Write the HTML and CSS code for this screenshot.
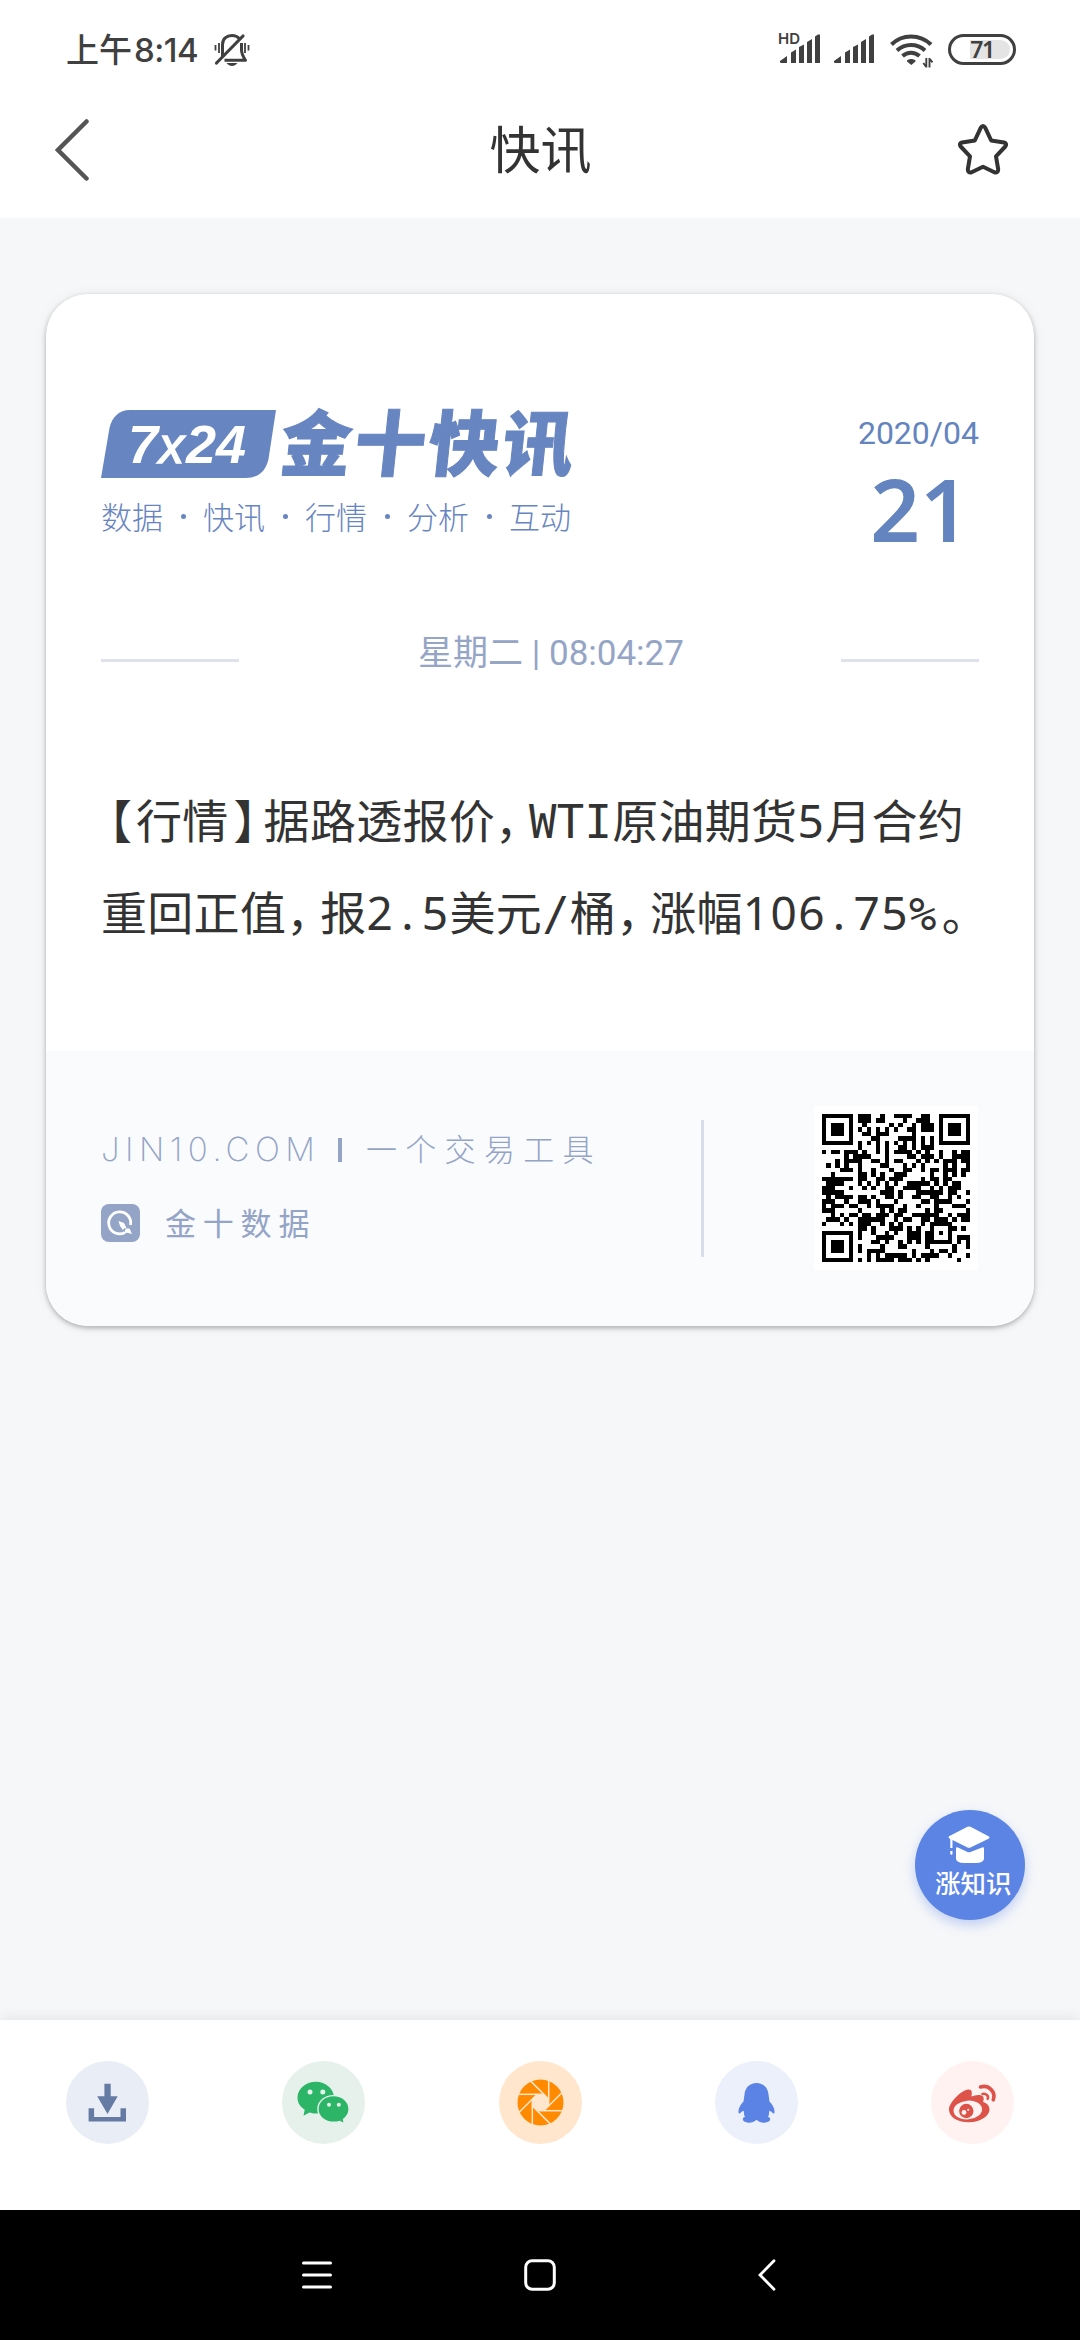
FILE: index.html
```html
<!DOCTYPE html>
<html lang="zh-CN">
<head>
<meta charset="utf-8">
<title>快讯</title>
<link rel="stylesheet" href="styles.css">
</head>
<body>
<div class="screen">
  <div class="status">
    <div class="status-left">
      <span class="clock">上午<span class="digits">8:14</span></span>
      <svg class="bell" width="36" height="34" viewBox="0 0 36 34" fill="none" stroke="#404040">
        <path d="M8.500 23V11.500C8.500 6 12.500 2.500 18 2.500c3 0 5.500 1 7.200 3M27.500 10v7c0 4 1.500 6.500 4 10.300H10.500" stroke-width="3" stroke-linejoin="round"/>
        <path d="M2.500 30L29 3" stroke-width="3.200" stroke-linecap="round"/>
        <path d="M5 10v10M1.500 12v5.500M31 10v10M34.500 12v5.500" stroke-width="1.800"/>
        <path d="M12.500 30h11c-1.500 2-3.500 3-5.500 3s-4-1-5.500-3z" fill="#404040" stroke="none"/>
      </svg>
    </div>
    <div class="status-right">
      <div class="signal-hd">
        <span class="hd">HD</span>
        <svg width="40" height="30" viewBox="0 0 40 30" fill="#404040"><path d="M0 27l7-5v7H1q-1 0-1-1zM11 18.500l5-3V29h-5zM19 13l5-2.500V29h-5zM27 8l5-3V29h-5zM35 2.500L38 .500h2V29h-5z"/></svg>
      </div>
      <svg class="signal" width="40" height="30" viewBox="0 0 40 30" fill="#404040"><path d="M0 27l7-5v7H1q-1 0-1-1zM11 18.500l5-3V29h-5zM19 13l5-2.500V29h-5zM27 8l5-3V29h-5zM35 2.500L38 .500h2V29h-5z"/></svg>
      <svg class="wifi" width="43" height="34" viewBox="0 0 43 34" fill="none" stroke="#404040" stroke-width="4">
        <path d="M1.500 10.500C12-.300 30-.300 41 10.500M7 16.500c7.800-7.300 20-7.300 28 0M12.500 22c5-4.500 12-4.500 17 0"/>
        <path d="M17 26.500c2.500-2 6-2 8.500 0v1L21.300 31 17 27.500z" fill="#404040" stroke="none"/>
        <path d="M36.300 24v9.500M36.300 33l-3-4M39.500 24v9.500M39.500 24.500l3 4" stroke-width="1.900"/>
      </svg>
      <div class="battery"><span class="level"></span><span class="percent">71</span></div>
    </div>
  </div>

  <div class="titlebar">
    <svg width="34" height="62" viewBox="0 0 34 62" fill="none" stroke="#555" stroke-width="4.500" stroke-linecap="round"><path d="M31.500 2.500L3 31l28.500 28.500"/></svg>
    <h1>快讯</h1>
    <svg width="50" height="51" viewBox="0 0 50 51" fill="none" stroke="#333" stroke-width="4" stroke-linejoin="round"><path d="M22.700 3.800q2.300-3.600 4.600 0L33.200 16.500l12.800 2q3.500 1 1.300 4L38 32.300l2.200 13q0 3.900-3.800 3L25 42.800 13.600 48.300q-3.800.900-3.800-3L12 32.300 2.700 22.500q-2.200-3 1.300-4L16.800 16.500z"/></svg>
  </div>

  <main class="content">
    <article class="card">
      <div class="card-body">
        <header class="card-head">
          <div class="brand">
            <div class="logo">
              <div class="badge"><svg width="175" height="68" viewBox="0 0 175 68"><path d="M0 68L8.500 18C11 7 18 0 29 0h146l-7.500 49C165 61 157 68 145 68z" fill="#6785c1"/></svg><span class="badge-text">7<i>x</i>24</span></div>
              <div class="wordmark">金十快讯</div>
            </div>
            <div class="tagline"><span>数据</span><b></b><span>快讯</span><b></b><span>行情</span><b></b><span>分析</span><b></b><span>互动</span></div>
          </div>
          <div class="date"><div class="month">2020/04</div><div class="day">21</div></div>
        </header>
        <div class="timeline"><hr><span>星期二 | 08:04:27</span><hr></div>
        <div class="news">
          <p><span class="pn open">【</span>行情<span class="pn close">】</span>据路透报价<span class="pn">，</span><span class="mono">WTI</span>原油期货<span class="num">5</span>月合约</p>
          <p>重回正值<span class="pn">，</span>报<span class="num">2<span class="dot">.</span>5</span>美元<span class="mono">/</span>桶<span class="pn">，</span>涨幅<span class="num">106<span class="dot">.</span>75</span><span class="mono">%</span><span class="pn stop">。</span></p>
        </div>
      </div>
      <footer class="card-foot">
        <div class="about">
          <div class="site"><span class="domain">JIN10.COM</span><span class="bar"></span><span class="slogan">一个交易工具</span></div>
          <div class="account">
            <svg width="39" height="38" viewBox="0 0 39 38"><rect width="39" height="38" rx="8" fill="#93a4c6"/><path d="M24 28.500A11 11 0 1 1 29.500 21" fill="none" stroke="#fff" stroke-width="2.800"/><path d="M17.500 17l5.500 2 2.500 5-2.200.300-1.300 1.800-3-4z" fill="#fff"/><path d="M24.500 24.500l4 0 2.500 5.500-4.800-1.300-2.400.300z" fill="#fff"/></svg>
            <span>金十数据</span>
          </div>
        </div>
        <div class="divider"></div>
        <div class="qr"><svg id="qr" width="148" height="148" viewBox="0 0 33 33" shape-rendering="crispEdges"></svg></div>
      </footer>
    </article>
    <div class="fab">
      <svg width="42" height="38" viewBox="0 0 42 38" fill="#fff"><path d="M19.500.800q1.500-.800 3 0L41 10.500q1 1 0 2L22.500 21.500q-1.500.600-3 0L4.500 14v8H2.300V13L1 12.300q-1-1 0-2zM2.300 25h2.200v3l-1 1-1.200-1zM8 22.500q0-2 2-1l9.500 4.500q1.500.600 3 0L34 21.500q2-1 2 1V33q-1 4-8 4H16q-7 0-8-4z"/></svg>
      <span>涨知识</span>
    </div>
  </main>

  <div class="share">
    <div class="round save"><svg viewBox="0 0 83 83" fill="#667ba3"><path d="M38.400 22.700h6.300v12.600h7L41.500 53 31.200 35.300h7.200zM22.600 47.300h5.500V56h26.400v-8.700H60v13.200H22.600z"/></svg></div>
    <div class="round wechat"><svg viewBox="0 0 83 83" fill="#2cb566"><path d="M33.800 20.700c10 0 18.200 7 18.200 16.200S43.800 52.500 33.800 52.500c-2.500 0-4.500-.500-6.300-1L21.500 54.800l1.200-6c-4.500-3-7.200-7-7.200-12 0-9 8.200-16.100 18.300-16.100z"/><path d="M51.500 34.600c8.700 0 15.600 6 15.600 13.500 0 4.200-2.200 7.800-5.600 10.200l.700 4.500-4.500-2.400c-2 .600-4 .900-6.200.900-8.700 0-15.600-5.700-15.600-13.200s6.900-13.500 15.600-13.500z" stroke="#e6f1eb" stroke-width="1.400"/><g fill="#e6f1eb"><circle cx="28" cy="31" r="2.500"/><circle cx="40.800" cy="31" r="2.500"/><circle cx="47" cy="43.700" r="2"/><circle cx="56.800" cy="43.700" r="2"/></g></svg></div>
    <div class="round moments"><svg viewBox="0 0 83 83"><circle cx="41.500" cy="41.500" r="23" fill="#ff8a00"/><path d="M38.100 33.300h6.800l4.800 4.800v6.800l-4.800 4.800h-6.800l-4.800-4.800v-6.800z" fill="#ffe6cd"/><g stroke="#ffe6cd" stroke-width="1.500"><path id="blade" d="M49.700 17v28"/><use href="#blade" transform="rotate(45 41.500 41.500)"/><use href="#blade" transform="rotate(90 41.500 41.500)"/><use href="#blade" transform="rotate(135 41.500 41.500)"/><use href="#blade" transform="rotate(180 41.500 41.500)"/><use href="#blade" transform="rotate(225 41.500 41.500)"/><use href="#blade" transform="rotate(270 41.500 41.500)"/><use href="#blade" transform="rotate(315 41.500 41.500)"/></g></svg></div>
    <div class="round qq"><svg viewBox="0 0 83 83" fill="#5b82e5"><path d="M41.500 22C48.500 22 53 27 53.500 33.500L54.500 40.500C57.500 43.500 60 48 59.500 51.500C59.200 53.300 58 52.800 56.500 50.800L54.300 49.800L53.800 54.500L52.800 55.700C55.300 56.500 55.600 57.800 54.800 59.500C52.500 62.500 45 62.500 41.500 58.800C38 62.500 30.500 62.500 28.200 59.500C27.400 57.800 27.700 56.500 30.200 55.700L29.200 54.500L28.700 49.800L26.500 50.800C25 52.800 23.800 53.300 23.500 51.500C23 48 25.500 43.500 28.500 40.500L29.500 33.500C30 27 34.500 22 41.500 22Z"/></svg></div>
    <div class="round weibo"><svg viewBox="0 0 83 83"><path d="M18 48.500C18 42 30 29 37.500 28.500C41 28.200 41.500 32 40.300 35.500C44 34 49 33 51.500 35C53.500 37 52.500 39.500 52 41C56 42 58.500 45 58.500 48.500C58.500 55 49 61.300 38 61.300C27 61.300 18 56.500 18 48.500Z" fill="#de5349"/><ellipse cx="36.800" cy="49" rx="14.300" ry="9.400" transform="rotate(-5 36.800 49)" fill="#fff2f1"/><circle cx="35.300" cy="50" r="7.200" fill="#de5349"/><circle cx="33" cy="51.500" r="2.400" fill="#fff2f1"/><circle cx="37.200" cy="48.800" r="1.100" fill="#fff2f1"/><g fill="none" stroke="#de5349" stroke-linecap="round"><path d="M49.500 26C57.500 23.500 65 30.500 62.300 38.800" stroke-width="3.600"/><path d="M51.500 33C55 32 58 35 56.700 37.800" stroke-width="2.600"/></g></svg></div>
  </div>

  <nav class="nav">
    <svg width="30" height="30" viewBox="0 0 30 30" stroke="#fff" stroke-width="3" stroke-linecap="round"><path d="M1.500 3h27M1.500 15h27M1.500 27h27"/></svg>
    <svg class="home" width="32" height="32" viewBox="0 0 32 32" fill="none" stroke="#fff" stroke-width="3"><rect x="1.700" y="1.700" width="28.600" height="28.600" rx="6.500"/></svg>
    <svg width="18" height="32" viewBox="0 0 18 32" fill="none" stroke="#fff" stroke-width="2.800" stroke-linecap="round"><path d="M16 1.800L2 16l14 14.200"/></svg>
  </nav>
</div>
<script src="qr.js"></script>
</body>
</html>
```
FILE: styles.css
```css
* { box-sizing: border-box; }
body { margin: 0; background: #f6f7f9; font-family: "Noto Sans CJK SC", sans-serif; color: #333; }
svg { display: block; flex: none; }
.screen { width: 1080px; height: 2340px; display: flex; flex-direction: column; overflow: hidden; }

.status { height: 84px; padding: 0 64px 0 66px; background: #fff; display: flex; justify-content: space-between; color: #404040; }
.status-left, .status-right { display: flex; align-items: flex-start; }
.clock { font-size: 33px; font-weight: 500; line-height: 48px; padding-top: 24px; white-space: nowrap; }
.digits { font-family: Inter, sans-serif; font-weight: 500; font-size: 33px; margin-left: 2px; letter-spacing: -.5px; }
.bell { margin: 33px 0 0 16px; }
.signal-hd { position: relative; padding-top: 34px; }
.hd { position: absolute; left: -2px; top: 31px; font: 600 15px/16px Inter, sans-serif; }
.signal { margin: 34px 0 0 14px; }
.wifi { margin: 34px 0 0 16px; }
.battery { width: 68px; height: 31px; margin: 34px 0 0 15px; border: 3px solid #404040; border-radius: 16px; position: relative; }
.level { position: absolute; right: 3px; top: 3px; width: 40px; height: 19px; background: #e4e4e4; border-radius: 0 10px 10px 0; }
.percent { position: relative; display: block; text-align: center; font: 600 23px/25px "Noto Sans", sans-serif; letter-spacing: -1.500px; }

.titlebar { height: 134px; padding: 0 72px 3px 55px; background: #fff; display: flex; justify-content: space-between; align-items: center; }
.titlebar h1 { margin: 0 0 5px 34px; font-size: 51px; font-weight: 400; line-height: 70px; }

.content { height: 1802px; padding: 76px 46px 0; position: relative; }
.card { height: 1032px; background: #fff; border-radius: 42px; overflow: hidden; display: flex; flex-direction: column; box-shadow: 0 2px 5px rgba(0, 0, 0, .28), 0 1px 14px rgba(0, 0, 0, .06); }
.card-body { height: 757px; padding: 116px 55px 0; }
.card-head { display: flex; justify-content: space-between; height: 158px; }
.logo { display: flex; }
.badge { position: relative; width: 175px; height: 68px; }
.badge-text { position: absolute; left: 27px; top: 3px; color: #fff; font: italic 700 54px/62px "Liberation Sans", sans-serif; }
.badge-text i { font-size: 50px; font-weight: 400; -webkit-text-stroke: 1.500px #fff; margin: 0 2px 0 1px; }
.wordmark { font-size: 71px; font-weight: 900; line-height: 58px; height: 68px; margin-left: 5px; letter-spacing: 3px; color: #6785c1; transform: skewX(-6deg); -webkit-text-stroke: 1px #6785c1; white-space: nowrap; }
.tagline { display: flex; align-items: center; width: 470px; justify-content: space-between; margin-top: 15px; font-size: 31px; line-height: 46px; font-weight: 300; color: #6785c1; }
.tagline b { width: 5px; height: 5px; border-radius: 50%; background: #6785c1; }
.date { color: #6384be; text-align: center; }
.month { font: 400 32px/38px Roboto, sans-serif; margin-top: 4px; }
.day { font: 600 87px/100px "Noto Sans", sans-serif; margin-top: 6px; padding-left: 3px; }
.timeline { display: flex; justify-content: space-between; align-items: center; margin-top: 56px; height: 60px; color: #95a5c6; }
.timeline hr { width: 138px; height: 3px; border: 0; margin: 13px 0 0; background: #dfe2ec; }
.timeline span { font: 400 35px/60px Roboto, "Noto Sans CJK SC", sans-serif; margin-left: 22px; }
.news { margin-top: 88px; font-size: 46px; line-height: 92px; letter-spacing: .3px; }
.news p { margin: 0; height: 92px; white-space: nowrap; display: flex; align-items: baseline; }
.pn { width: 34px; font-feature-settings: "halt"; letter-spacing: 0; }
.open { padding-left: 8px; width: 35px; }
.close { padding-left: 5px; width: 35px; }
.stop { padding-left: 5px; }
.mono { font-family: "DejaVu Sans Mono", monospace; font-size: 45.500px; line-height: 60px; }
.num { font-family: "Noto Sans", sans-serif; display: inline-flex; letter-spacing: 1.400px; line-height: 60px; }
.dot { width: 27.600px; text-align: center; }

.card-foot { height: 275px; background: #fafbfd; padding: 0 55px; display: flex; color: #93a4c6; }
.about { width: 600px; padding-top: 74px; }
.site { display: flex; align-items: center; height: 48px; }
.domain { font: 200 33px/48px Inter, sans-serif; letter-spacing: 5.500px; width: 214px; white-space: nowrap; }
.bar { width: 4px; height: 24px; margin: 2px 24px 0 23px; background: #93a4c6; }
.slogan { font-size: 31px; font-weight: 300; letter-spacing: 8.300px; line-height: 48px; margin-top: -2px; }
.account { display: flex; align-items: center; margin-top: 26px; height: 48px; }
.account span { font-size: 31px; letter-spacing: 6.800px; margin: -3px 0 0 25px; line-height: 48px; }
.divider { width: 3px; height: 137px; margin-top: 69px; background: #d7dde9; }
.qr { margin: 55px 0 0 auto; padding: 8px; width: 164px; height: 164px; background: #fff; margin-right: 1px; }

.fab { position: absolute; right: 55px; bottom: 100px; width: 110px; height: 110px; border-radius: 50%; background: #5b84e5; box-shadow: 0 5px 12px rgba(91, 132, 229, .35); color: #fff; }
.fab svg { margin: 16px 0 0 33px; }
.fab span { display: block; font-size: 25.500px; font-weight: 500; line-height: 36px; margin: 0 0 0 20px; white-space: nowrap; }

.share { height: 190px; background: #fff; padding: 41px 66px 0; display: flex; justify-content: space-between; box-shadow: 0 -2px 12px rgba(0, 0, 0, .08); position: relative; }
.round { width: 83px; height: 83px; border-radius: 50%; }
.save { background: #e8edf6; }
.wechat { background: #e6f1eb; }
.moments { background: #ffe6cd; }
.qq { background: #ebf0fb; }
.weibo { background: #fff2f1; }

.nav { height: 130px; background: #000; display: flex; align-items: center; padding-left: 302px; position: relative; }
.home { margin: 0 202px 0 192px; }
```
FILE: qr.js
```js
// Draws a version 4, level M QR code (33 x 33 modules) as one SVG path.
(function () {
  var text = 'http://a.app.qq.com/o/simple.jsp?pkgname=com.jin10';
  var N = 33, DATA = 64, BLOCKS = 2, ECC = 18, MASK = 3;

  var exp = [], log = [], v = 1;
  for (var i = 0; i < 255; i++) { exp[i] = v; log[v] = i; v <<= 1; if (v & 256) v ^= 0x11d; }
  function mul(a, b) { return a && b ? exp[(log[a] + log[b]) % 255] : 0; }

  var bits = [];
  function put(val, n) { for (var k = n - 1; k >= 0; k--) bits.push((val >> k) & 1); }
  put(4, 4); put(text.length, 8);
  for (i = 0; i < text.length; i++) put(text.charCodeAt(i), 8);
  put(0, 4);
  for (var pad = 0xec; bits.length < DATA * 8; pad ^= 0xec ^ 0x11) put(pad, 8);
  var bytes = [];
  for (i = 0; i < DATA; i++) bytes.push(parseInt(bits.slice(i * 8, i * 8 + 8).join(''), 2));

  var gen = [1];
  for (i = 0; i < ECC; i++) {
    var next = gen.concat([0]);
    for (var j = 0; j < gen.length; j++) next[j + 1] ^= mul(gen[j], exp[i]);
    gen = next;
  }
  function ecc(block) {
    var r = block.concat(new Array(ECC).fill(0));
    for (var a = 0; a < block.length; a++) {
      var f = r[a];
      for (var b = 0; b < gen.length; b++) r[a + b] ^= mul(gen[b], f);
    }
    return r.slice(block.length);
  }
  var d = [], e = [], size = DATA / BLOCKS, out = [];
  for (i = 0; i < BLOCKS; i++) { d[i] = bytes.slice(i * size, (i + 1) * size); e[i] = ecc(d[i]); }
  for (i = 0; i < size; i++) for (j = 0; j < BLOCKS; j++) out.push(d[j][i]);
  for (i = 0; i < ECC; i++) for (j = 0; j < BLOCKS; j++) out.push(e[j][i]);

  var m = [], fn = [];
  for (i = 0; i < N; i++) { m.push(new Array(N).fill(0)); fn.push(new Array(N).fill(0)); }
  function set(x, y, c) { if (x >= 0 && y >= 0 && x < N && y < N) { m[y][x] = c ? 1 : 0; fn[y][x] = 1; } }
  for (i = 0; i < N; i++) { set(6, i, i % 2 === 0); set(i, 6, i % 2 === 0); }
  [[3, 3], [N - 4, 3], [3, N - 4]].forEach(function (p) {
    for (var y = -4; y <= 4; y++) for (var x = -4; x <= 4; x++) {
      var r = Math.max(Math.abs(x), Math.abs(y));
      set(p[0] + x, p[1] + y, r !== 2 && r !== 4);
    }
  });
  for (var ay = -2; ay <= 2; ay++) for (var ax = -2; ax <= 2; ax++) set(26 + ax, 26 + ay, Math.max(Math.abs(ax), Math.abs(ay)) !== 1);

  var rem = MASK;
  for (var k = 0; k < 10; k++) rem = (rem << 1) ^ ((rem >> 9) * 0x537);
  var f = ((MASK << 10) | rem) ^ 0x5412;
  function bit(n) { return (f >> n) & 1; }
  for (k = 0; k < 6; k++) set(8, k, bit(k));
  set(8, 7, bit(6)); set(8, 8, bit(7)); set(7, 8, bit(8));
  for (k = 9; k < 15; k++) set(14 - k, 8, bit(k));
  for (k = 0; k < 8; k++) set(N - 1 - k, 8, bit(k));
  for (k = 8; k < 15; k++) set(8, N - 15 + k, bit(k));
  set(8, N - 8, 1);

  var n = 0;
  for (var right = N - 1; right >= 1; right -= 2) {
    if (right === 6) right = 5;
    for (var s = 0; s < N; s++) for (j = 0; j < 2; j++) {
      var cx = right - j, cy = ((right + 1) & 2) === 0 ? N - 1 - s : s;
      if (fn[cy][cx]) continue;
      var c = n < out.length * 8 ? (out[n >> 3] >> (7 - (n & 7))) & 1 : 0;
      n++;
      m[cy][cx] = (cx + cy) % 3 === 0 ? c ^ 1 : c;
    }
  }

  var path = '';
  for (var y = 0; y < N; y++) for (var x = 0; x < N; x++) if (m[y][x]) path += 'M' + x + ' ' + y + 'h1v1h-1z';
  var el = document.createElementNS('http://www.w3.org/2000/svg', 'path');
  el.setAttribute('d', path);
  document.getElementById('qr').appendChild(el);
})();
```
